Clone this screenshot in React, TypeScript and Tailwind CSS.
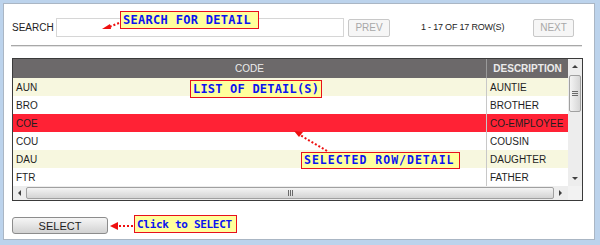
import React from "react";

const ROWS = [
  { code: "AUN", desc: "AUNTIE", bg: "bg-[#f7f7df]" },
  { code: "BRO", desc: "BROTHER", bg: "bg-white" },
  { code: "COE", desc: "CO-EMPLOYEE", bg: "bg-[#ff2235]" },
  { code: "COU", desc: "COUSIN", bg: "bg-white" },
  { code: "DAU", desc: "DAUGHTER", bg: "bg-[#f7f7df]" },
  { code: "FTR", desc: "FATHER", bg: "bg-white" },
];

function Note({ className, children }: { className: string; children: React.ReactNode }) {
  return (
    <div
      className={`absolute flex items-center border-[1.5px] border-[#e8101c] bg-[#ffff9c] pl-[2px] font-['DejaVu_Sans_Mono',monospace] font-bold leading-none text-[#0a14f0] ${className}`}
    >
      {children}
    </div>
  );
}

function ScrollArrow({ dir }: { dir: "up" | "down" | "left" | "right" }) {
  const pts = {
    up: "1,5 4,2 7,5",
    down: "1,2 4,5 7,2",
    left: "5,1 2,4 5,7",
    right: "2,1 5,4 2,7",
  }[dir];
  return (
    <svg width="8" height="8" viewBox="0 0 8 8">
      <polygon points={pts} fill="#404040" />
    </svg>
  );
}

export default function App() {
  return (
    <div className="relative h-[245px] w-[600px] overflow-hidden bg-[#bcd3ec] pb-[5px] pl-[3px] pr-[5px] pt-[3px] font-['Liberation_Sans',Arial,sans-serif]">
      <div className="flex h-full flex-col border border-[#aab6c4] bg-white">
        {/* search row */}
        <div className="mt-[14px] flex h-[19px] items-center text-[10px] text-[#222]">
          <span className="ml-[8px] w-[44px]">SEARCH</span>
          <div className="h-[19px] w-[288px] border border-[#d6d6d6] bg-white" />
          <button className="ml-[4px] h-[18px] w-[42px] rounded-[2px] border border-[#c8c8c8] bg-[#f6f6f6] text-[10px] text-[#a8a8a8]">
            PREV
          </button>
          <span className="ml-[31px] w-[112px] text-[9px] tracking-[-0.2px] text-[#222]">1 - 17 OF 17 ROW(S)</span>
          <button className="h-[18px] w-[41px] rounded-[2px] border border-[#c8c8c8] bg-[#f6f6f6] text-[10px] text-[#a8a8a8]">
            NEXT
          </button>
        </div>

        <div className="ml-[7px] mt-[8px] h-[2px] w-[571px] border-t border-[#a8a8a8] bg-[#e4e4e4]" />

        {/* table */}
        <div className="ml-[8px] mt-[11px] flex w-[571px] flex-col border border-[#3a3a3a]">
          <div className="flex">
            <div className="flex w-[555px] flex-col">
              <div className="flex h-[19px] bg-[#6c696a] text-[10px] text-[#ececec]">
                <div className="flex w-[473px] items-center justify-center">CODE</div>
                <div className="flex flex-1 items-center justify-center border-l border-[#9a9a9a] font-bold">DESCRIPTION</div>
              </div>
              {ROWS.map((r) => (
                <div key={r.code} className={`flex h-[18px] text-[10px] text-[#1e1e1e] ${r.bg}`}>
                  <div className="flex w-[473px] items-center pl-[3px]">{r.code}</div>
                  <div className="flex flex-1 items-center border-l border-[#c8c8c8] pl-[3px]">{r.desc}</div>
                </div>
              ))}
            </div>
            {/* vertical scrollbar */}
            <div className="flex w-[14px] flex-col items-center bg-[#ededed]">
              <div className="flex h-[15px] items-center justify-center">
                <ScrollArrow dir="up" />
              </div>
              <div className="mt-[1px] flex h-[37px] w-[12px] flex-col items-center justify-center gap-[1px] rounded-[2px] border border-[#a0a0a0] bg-gradient-to-r from-[#f4f4f4] to-[#d6d6d6]">
                <div className="h-px w-[6px] bg-[#6a6a6a]" />
                <div className="h-px w-[6px] bg-[#6a6a6a]" />
                <div className="h-px w-[6px] bg-[#6a6a6a]" />
              </div>
              <div className="flex-1" />
              <div className="flex h-[15px] items-center justify-center">
                <ScrollArrow dir="down" />
              </div>
            </div>
          </div>
          {/* horizontal scrollbar */}
          <div className="flex h-[14px] bg-[#ededed]">
            <div className="flex w-[13px] items-center justify-center">
              <ScrollArrow dir="left" />
            </div>
            <div className="my-[1px] flex w-[528px] items-center justify-center gap-[1px] rounded-[2px] border border-[#a0a0a0] bg-gradient-to-b from-[#f4f4f4] to-[#d4d4d4]">
              <div className="h-[6px] w-px bg-[#6a6a6a]" />
              <div className="h-[6px] w-px bg-[#6a6a6a]" />
              <div className="h-[6px] w-px bg-[#6a6a6a]" />
            </div>
            <div className="flex w-[14px] items-center justify-center">
              <ScrollArrow dir="right" />
            </div>
            <div className="flex-1 bg-[#f2f2f2]" />
          </div>
        </div>

        <button className="ml-[8px] mt-[16px] h-[17px] w-[96px] rounded-[3px] border border-[#8c8c8c] bg-gradient-to-b from-[#f6f6f6] to-[#d2d2d2] text-[11px] text-[#1e1e1e]">
          SELECT
        </button>
      </div>

      {/* annotations */}
      <Note className="left-[120px] top-[11px] h-[18px] w-[139px] text-[12px] tracking-[0.3px]">SEARCH FOR DETAIL</Note>
      <Note className="left-[190px] top-[80px] h-[18px] w-[132px] text-[12px] tracking-[0.2px]">LIST OF DETAIL(S)</Note>
      <Note className="left-[301px] top-[152px] h-[17px] w-[159px] text-[11.5px] tracking-[1px]">SELECTED ROW/DETAIL</Note>
      <Note className="left-[134px] top-[215px] h-[18px] w-[103px] text-[11px] tracking-[-0.3px]">Click to SELECT</Note>

      <svg className="pointer-events-none absolute left-0 top-0" width="600" height="245">
        <g stroke="#ee1010" strokeWidth="2" strokeDasharray="2 2" fill="none">
          <line x1="119" y1="23" x2="109" y2="27" />
          <line x1="327" y1="151" x2="300" y2="135" />
          <line x1="133" y1="226" x2="117" y2="226" />
        </g>
        <g fill="#ee1010">
          <polygon points="102,29 110,24 111,29" />
          <polygon points="294,131 303,132 299,137" />
          <polygon points="110,226 118,222 118,230" />
        </g>
      </svg>
    </div>
  );
}
